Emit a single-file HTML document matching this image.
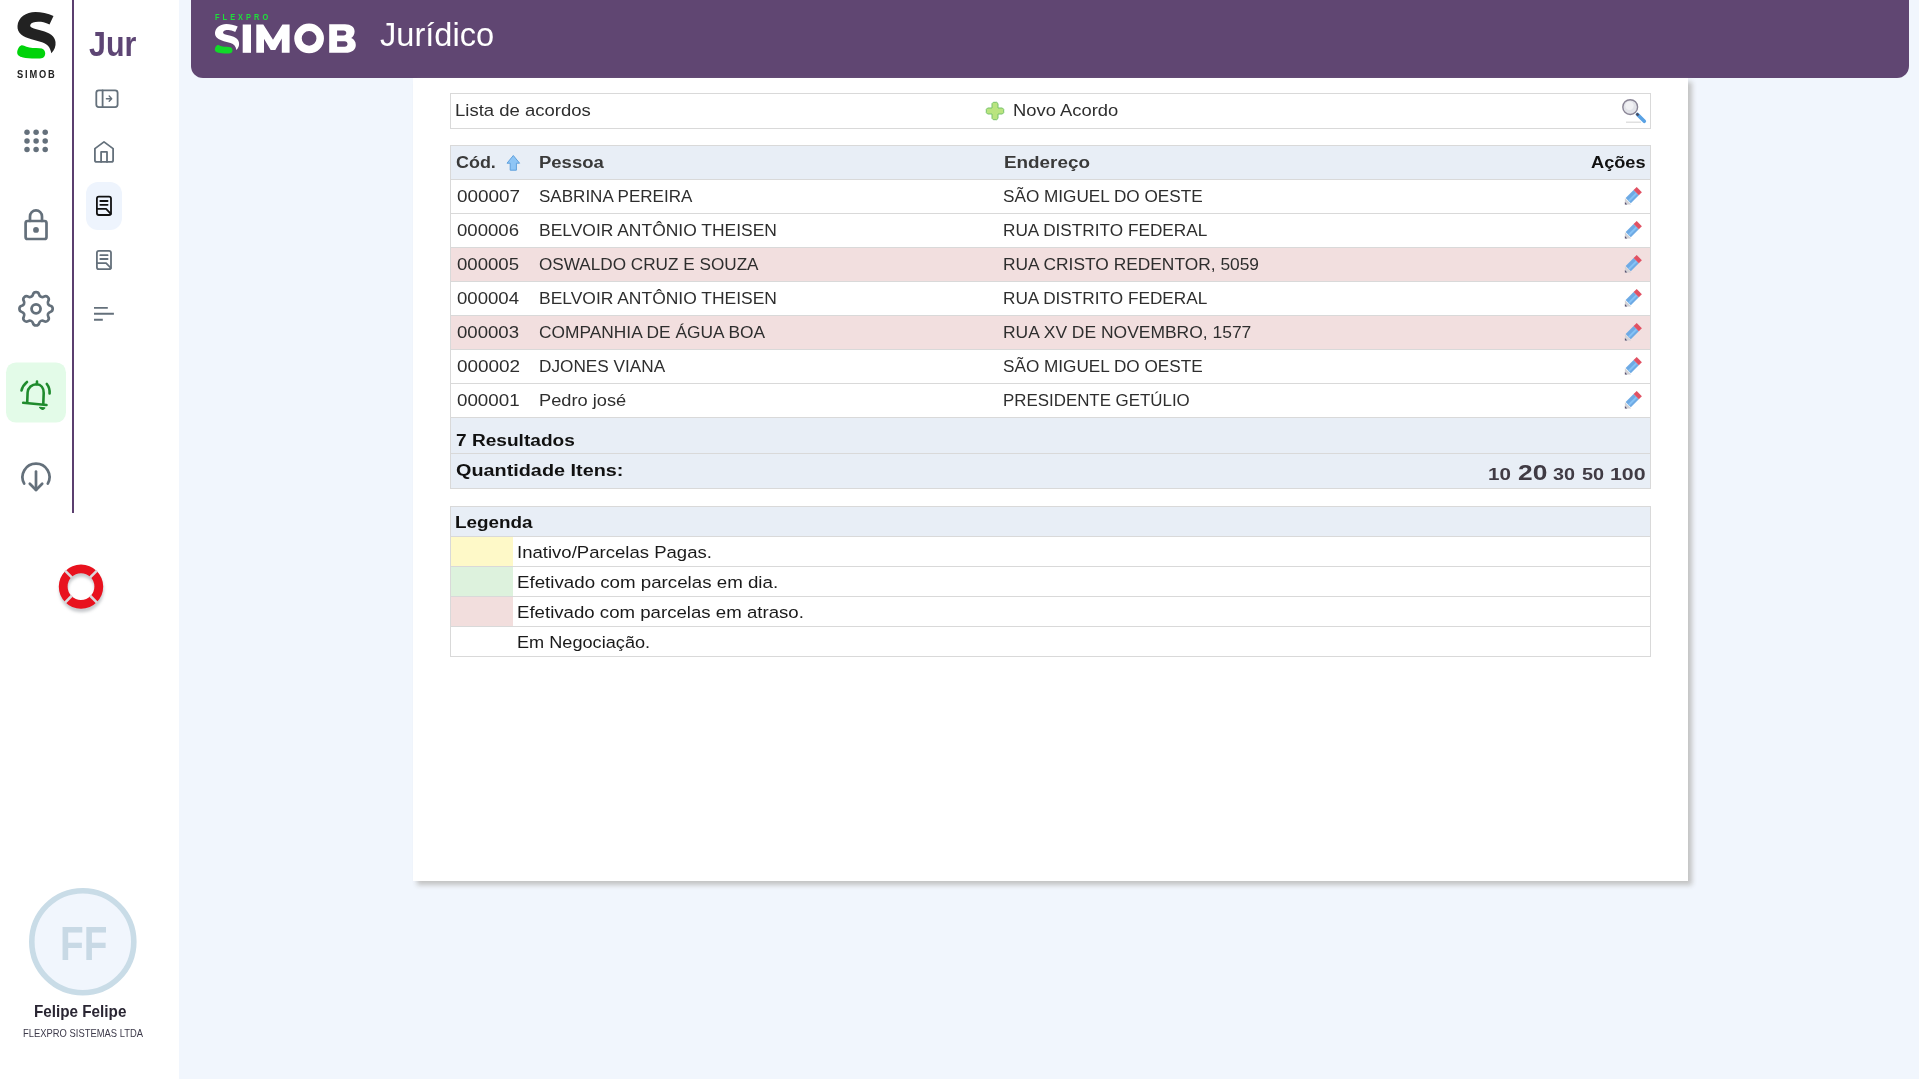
<!DOCTYPE html>
<html><head><meta charset="utf-8">
<style>
*{box-sizing:border-box;margin:0;padding:0}
html,body{width:1919px;height:1079px;overflow:hidden;background:#f1f6fd;font-family:"Liberation Sans",sans-serif}
.a{position:absolute}
.t{position:absolute;white-space:nowrap;line-height:1;transform-origin:0 0}
svg{position:absolute;overflow:visible}
</style></head><body>
<div class="a" style="left:0px;top:0px;width:179px;height:1079px;background:#fff"></div>
<div class="a" style="left:72px;top:0px;width:2px;height:513px;background:#5b3f6f"></div>
<div class="a" style="left:191px;top:0px;width:1718px;height:78px;background:#604672;border-radius:0 0 12px 12px"></div>
<div class="a" style="left:413px;top:78px;width:1275px;height:803px;background:#fff;box-shadow:4px 4px 5px #c2c2c2"></div>
<div class="a" style="left:450px;top:93px;width:1201px;height:36px;border:1px solid #d9d9d9;background:#fff"></div>
<div class="a" style="left:451px;top:146px;width:1199px;height:33px;background:#e8eef6"></div>
<div class="a" style="left:451px;top:248px;width:1199px;height:33px;background:#f2dfdf"></div>
<div class="a" style="left:451px;top:316px;width:1199px;height:33px;background:#f2dfdf"></div>
<div class="a" style="left:451px;top:418px;width:1199px;height:70px;background:#e8eef6"></div>
<div class="a" style="left:450px;top:145px;width:1201px;height:1px;background:#d9d9d9"></div>
<div class="a" style="left:450px;top:179px;width:1201px;height:1px;background:#d9d9d9"></div>
<div class="a" style="left:450px;top:213px;width:1201px;height:1px;background:#d9d9d9"></div>
<div class="a" style="left:450px;top:247px;width:1201px;height:1px;background:#d9d9d9"></div>
<div class="a" style="left:450px;top:281px;width:1201px;height:1px;background:#d9d9d9"></div>
<div class="a" style="left:450px;top:315px;width:1201px;height:1px;background:#d9d9d9"></div>
<div class="a" style="left:450px;top:349px;width:1201px;height:1px;background:#d9d9d9"></div>
<div class="a" style="left:450px;top:383px;width:1201px;height:1px;background:#d9d9d9"></div>
<div class="a" style="left:450px;top:417px;width:1201px;height:1px;background:#d9d9d9"></div>
<div class="a" style="left:450px;top:453px;width:1201px;height:1px;background:#d9d9d9"></div>
<div class="a" style="left:450px;top:488px;width:1201px;height:1px;background:#d9d9d9"></div>
<div class="a" style="left:450px;top:145px;width:1px;height:344px;background:#d9d9d9"></div>
<div class="a" style="left:1650px;top:145px;width:1px;height:344px;background:#d9d9d9"></div>
<div class="a" style="left:451px;top:507px;width:1199px;height:29px;background:#e8eef6"></div>
<div class="a" style="left:451px;top:537px;width:62px;height:29px;background:#fef9c8"></div>
<div class="a" style="left:451px;top:567px;width:62px;height:29px;background:#ddf2dd"></div>
<div class="a" style="left:451px;top:597px;width:62px;height:29px;background:#f2dedd"></div>
<div class="a" style="left:451px;top:627px;width:62px;height:29px;background:#fff"></div>
<div class="a" style="left:450px;top:506px;width:1201px;height:1px;background:#d9d9d9"></div>
<div class="a" style="left:450px;top:536px;width:1201px;height:1px;background:#d9d9d9"></div>
<div class="a" style="left:450px;top:566px;width:1201px;height:1px;background:#d9d9d9"></div>
<div class="a" style="left:450px;top:596px;width:1201px;height:1px;background:#d9d9d9"></div>
<div class="a" style="left:450px;top:626px;width:1201px;height:1px;background:#d9d9d9"></div>
<div class="a" style="left:450px;top:656px;width:1201px;height:1px;background:#d9d9d9"></div>
<div class="a" style="left:450px;top:506px;width:1px;height:151px;background:#d9d9d9"></div>
<div class="a" style="left:1650px;top:506px;width:1px;height:151px;background:#d9d9d9"></div>
<svg style="left:0;top:0" width="1919" height="1079" viewBox="0 0 1919 1079">
<path d="M53.5,16 C48,13.5 41,12 35.5,12 C26,12 18,17.5 17.5,26 C17,33 23,37 31.5,39.3 L42,42.2 C47.5,44 50.5,47.5 51.3,53.3 C54.5,50 56,46 55.5,42 C55,36 49,32.5 42,30.7 L35.5,29 C31,27.8 29.5,26.5 30.5,24.5 C31.5,22 36,21.3 41,21.8 C44.5,22.3 47.5,23.5 49.5,24.5 Z" fill="#222"/>
<path d="M21.5,45.3 C19,46 17.5,49.5 17.2,52 C17,55 19,56.5 23,57.5 C27,58.5 34,58.8 40,58.5 C44,58.2 45.3,56 45.2,53 C45,50 43,48.2 39.5,48.2 C35,48.2 30,48 26.5,46.8 C24.5,46 23,45 21.5,45.3 Z" fill="#00d30a"/>
<g transform="translate(215,24) scale(0.632) translate(-17.5,-12)"><path d="M53.5,16 C48,13.5 41,12 35.5,12 C26,12 18,17.5 17.5,26 C17,33 23,37 31.5,39.3 L42,42.2 C47.5,44 50.5,47.5 51.3,53.3 C54.5,50 56,46 55.5,42 C55,36 49,32.5 42,30.7 L35.5,29 C31,27.8 29.5,26.5 30.5,24.5 C31.5,22 36,21.3 41,21.8 C44.5,22.3 47.5,23.5 49.5,24.5 Z" fill="#fff"/><path d="M21.5,45.3 C19,46 17.5,49.5 17.2,52 C17,55 19,56.5 23,57.5 C27,58.5 34,58.8 40,58.5 C44,58.2 45.3,56 45.2,53 C45,50 43,48.2 39.5,48.2 C35,48.2 30,48 26.5,46.8 C24.5,46 23,45 21.5,45.3 Z" fill="#12d82a"/></g>
<rect x="242.7" y="24.5" width="8.3" height="28.3" fill="#fff"/>
<path d="M256.3,52.8 V24.5 H263.3 L273,39.7 L282.4,24.5 H289.6 V52.8 H281.8 V38.5 L275.3,49.9 H270.7 L264,38.8 V52.8 Z" fill="#fff"/>
<circle cx="309.1" cy="38.4" r="11.1" fill="none" stroke="#fff" stroke-width="7.5"/>
<path fill-rule="evenodd" fill="#fff" d="M329.2,24.25 H345 C351,24.25 354.6,27.3 354.6,31.5 C354.6,34.5 353,36.8 351.2,38 C354,39.2 355.8,41.5 355.8,45 C355.8,49.7 352,52.8 345.5,52.8 H329.2 Z M337.1,30.5 H343.5 C345.3,30.5 346.3,31.5 346.3,33 C346.3,34.5 345.3,35.5 343.5,35.5 H337.1 Z M337.1,41.3 H344.5 C346.5,41.3 347.5,42.5 347.5,44 C347.5,45.6 346.5,46.75 344.5,46.75 H337.1 Z"/>
<circle cx="27" cy="132.3" r="2.75" fill="#64707b"/>
<circle cx="27" cy="141" r="2.75" fill="#64707b"/>
<circle cx="27" cy="149.6" r="2.75" fill="#64707b"/>
<circle cx="36.1" cy="132.3" r="2.75" fill="#64707b"/>
<circle cx="36.1" cy="141" r="2.75" fill="#64707b"/>
<circle cx="36.1" cy="149.6" r="2.75" fill="#64707b"/>
<circle cx="45.2" cy="132.3" r="2.75" fill="#64707b"/>
<circle cx="45.2" cy="141" r="2.75" fill="#64707b"/>
<circle cx="45.2" cy="149.6" r="2.75" fill="#64707b"/>
<g fill="none" stroke="#64707b" stroke-width="2.7" stroke-linecap="round" stroke-linejoin="round"><rect x="25.6" y="221" width="20.9" height="18" rx="2"/><path d="M30,221 V216.4 A6,6 0 0 1 42,216.4 V221"/></g>
<circle cx="36" cy="229.9" r="2.9" fill="#64707b"/>
<g transform="translate(36.05,308.85) scale(1.85) translate(-12,-12)" fill="none" stroke="#64707b" stroke-width="1.45" stroke-linecap="round" stroke-linejoin="round"><path d="M10.325 4.317c.426 -1.756 2.924 -1.756 3.35 0a1.724 1.724 0 0 0 2.573 1.066c1.543 -.94 3.31 .826 2.37 2.37a1.724 1.724 0 0 0 1.065 2.572c1.756 .426 1.756 2.924 0 3.35a1.724 1.724 0 0 0 -1.066 2.573c.94 1.543 -.826 3.31 -2.37 2.37a1.724 1.724 0 0 0 -2.572 1.065c-.426 1.756 -2.924 1.756 -3.35 0a1.724 1.724 0 0 0 -2.573 -1.066c-1.543 .94 -3.31 -.826 -2.37 -2.37a1.724 1.724 0 0 0 -1.065 -2.572c-1.756 -.426 -1.756 -2.924 0 -3.35a1.724 1.724 0 0 0 1.066 -2.573c-.94 -1.543 .826 -3.31 2.37 -2.37c1 .608 2.296 .07 2.572 -1.065z"/></g>
<circle cx="36.05" cy="308.85" r="4.5" fill="none" stroke="#64707b" stroke-width="2.8"/>
<rect x="6" y="362.4" width="60" height="60.2" rx="10" fill="#e3fbe8"/>
<g fill="none" stroke="#1f8b2d" stroke-width="2.6" stroke-linecap="round" stroke-linejoin="round"><path d="M21.5,390.5 C22.5,386.5 24.5,384 27,382"/><path d="M46.8,384 C48.8,386.5 49.8,390 49.6,393.5"/><path d="M27.2,402.6 L27.6,392.5 C28,387.5 32,384.2 36.5,384.2 C41,384.4 43.8,388 43.7,393 L43.3,403.6"/><path d="M23.2,402.8 L46.5,405"/><path d="M37,381.6 L36.9,384"/></g>
<path d="M39.6,407.4 L44.8,407.9 Q42.6,411.2 39.6,407.4 Z" fill="#1f8b2d" stroke="#1f8b2d" stroke-width="1.2" stroke-linejoin="round"/>
<g fill="none" stroke="#64707b" stroke-width="2.7" stroke-linecap="round" stroke-linejoin="round"><path d="M24.2,483.6 A13.5,13.5 0 1 1 47.8,483.6"/><path d="M36,471.5 V490"/><path d="M29.8,483.8 L36,490 L42.2,483.8"/></g>
<g fill="none" stroke="#64707b" stroke-width="1.8" stroke-linecap="round" stroke-linejoin="round"><rect x="96.3" y="90.3" width="21.3" height="16.8" rx="2.5"/><path d="M102.6,90.3 V107.1"/></g>
<g fill="none" stroke="#64707b" stroke-width="1.4" stroke-linecap="round" stroke-linejoin="round"><path d="M106.4,98.7 H111.6 M109.2,96.1 L111.7,98.7 L109.2,101.3"/></g>
<g fill="none" stroke="#64707b" stroke-width="1.8" stroke-linecap="round" stroke-linejoin="round"><path d="M94.9,148.6 L104,141.9 L113.1,148.6 V160.2 Q113.1,161.9 111.4,161.9 H96.6 Q94.9,161.9 94.9,160.2 Z"/><path d="M101.1,161.9 V151.9 H107 V161.9"/></g>
<rect x="86" y="182" width="36" height="48" rx="12" fill="#eef4fd"/>
<g transform="translate(0,0)" fill="none" stroke="#111" stroke-width="1.8" stroke-linecap="round" stroke-linejoin="round"><rect x="96.9" y="196.6" width="14.1" height="18.4" rx="2"/><path d="M100.3,201 H107.6 M100.3,204.8 H107.6"/><path d="M96.9,208.9 H106.1 L110.8,213.8"/></g>
<g transform="translate(0,54.2)" fill="none" stroke="#64707b" stroke-width="1.8" stroke-linecap="round" stroke-linejoin="round"><rect x="96.9" y="196.6" width="14.1" height="18.4" rx="2"/><path d="M100.3,201 H107.6 M100.3,204.8 H107.6"/><path d="M96.9,208.9 H106.1 L110.8,213.8"/></g>
<g fill="none" stroke="#64707b" stroke-width="1.9"><path d="M94,307.9 H107.8 M94,313.75 H113.9 M94,319.8 H102.8"/></g>
<defs><filter id="sh" x="-50%" y="-50%" width="200%" height="200%"><feGaussianBlur stdDeviation="1.6"/></filter></defs>
<circle cx="81.5" cy="590" r="17.8" fill="none" stroke="#9aa0a6" stroke-opacity="0.55" stroke-width="9" filter="url(#sh)"/>
<circle cx="81" cy="586.6" r="17.8" fill="none" stroke="#e8121e" stroke-width="8.8"/>
<g transform="translate(81,586.6) rotate(45)"><rect x="13" y="-1.3" width="9.6" height="2.6" fill="#d9dadd"/></g>
<g transform="translate(81,586.6) rotate(135)"><rect x="13" y="-1.3" width="9.6" height="2.6" fill="#d9dadd"/></g>
<g transform="translate(81,586.6) rotate(225)"><rect x="13" y="-1.3" width="9.6" height="2.6" fill="#d9dadd"/></g>
<g transform="translate(81,586.6) rotate(315)"><rect x="13" y="-1.3" width="9.6" height="2.6" fill="#d9dadd"/></g>
<circle cx="82.8" cy="941.7" r="51" fill="#f1f6fd" stroke="#c9dce7" stroke-width="5.6"/>
<path d="M507,163.2 L513.3,155.5 L519.6,163.2 H516.4 V170.2 H510.2 V163.2 Z" fill="#8ec5f5" stroke="#5fa0dd" stroke-width="1"/>
<path d="M993.3,102.3 H996.7 L998,103.6 V108 H1002.4 L1003.7,109.3 V112.7 L1002.4,114 H998 V118.4 L996.7,119.7 H993.3 L992,118.4 V114 H987.6 L986.3,112.7 V109.3 L987.6,108 H992 V103.6 Z" fill="#b9e47f" stroke="#77c26b" stroke-width="1" stroke-linejoin="round"/>
<path d="M1626,122.2 H1641" stroke="#d8d8d8" stroke-width="1.2"/>
<path d="M1637.5,114.5 L1644.3,121.3" stroke="#5aa2e4" stroke-width="3.6" stroke-linecap="round"/>
<path d="M1636.5,113.5 L1638.5,115.5" stroke="#4b4b5e" stroke-width="2.4"/>
<circle cx="1630.2" cy="107.1" r="7.4" fill="#e2e3e8" stroke="#8a8596" stroke-width="1.4"/>
<circle cx="1629.5" cy="105.8" r="4.2" fill="#f1f1f4"/>
<g transform="translate(0,0)"><path d="M1624.9,198.2 L1631.2,204.5 H1624.9 Z" fill="#d2d2d6"/><path d="M1624.9,202.1 L1627.3,204.5 H1624.9 Z" fill="#57516f"/><path d="M1625.6,198.1 L1633.6,190.1 L1638.8,195.3 L1630.8,203.3 Z" fill="#6eaae4"/><path d="M1627.9,200.4 L1635.9,192.4 L1637.3,193.8 L1629.3,201.8 Z" fill="#86c2f6"/><path d="M1633.6,190.1 L1636.7,187.0 L1641.9,192.2 L1638.8,195.3 Z" fill="#e05163"/></g>
<g transform="translate(0,34)"><path d="M1624.9,198.2 L1631.2,204.5 H1624.9 Z" fill="#d2d2d6"/><path d="M1624.9,202.1 L1627.3,204.5 H1624.9 Z" fill="#57516f"/><path d="M1625.6,198.1 L1633.6,190.1 L1638.8,195.3 L1630.8,203.3 Z" fill="#6eaae4"/><path d="M1627.9,200.4 L1635.9,192.4 L1637.3,193.8 L1629.3,201.8 Z" fill="#86c2f6"/><path d="M1633.6,190.1 L1636.7,187.0 L1641.9,192.2 L1638.8,195.3 Z" fill="#e05163"/></g>
<g transform="translate(0,68)"><path d="M1624.9,198.2 L1631.2,204.5 H1624.9 Z" fill="#d2d2d6"/><path d="M1624.9,202.1 L1627.3,204.5 H1624.9 Z" fill="#57516f"/><path d="M1625.6,198.1 L1633.6,190.1 L1638.8,195.3 L1630.8,203.3 Z" fill="#6eaae4"/><path d="M1627.9,200.4 L1635.9,192.4 L1637.3,193.8 L1629.3,201.8 Z" fill="#86c2f6"/><path d="M1633.6,190.1 L1636.7,187.0 L1641.9,192.2 L1638.8,195.3 Z" fill="#e05163"/></g>
<g transform="translate(0,102)"><path d="M1624.9,198.2 L1631.2,204.5 H1624.9 Z" fill="#d2d2d6"/><path d="M1624.9,202.1 L1627.3,204.5 H1624.9 Z" fill="#57516f"/><path d="M1625.6,198.1 L1633.6,190.1 L1638.8,195.3 L1630.8,203.3 Z" fill="#6eaae4"/><path d="M1627.9,200.4 L1635.9,192.4 L1637.3,193.8 L1629.3,201.8 Z" fill="#86c2f6"/><path d="M1633.6,190.1 L1636.7,187.0 L1641.9,192.2 L1638.8,195.3 Z" fill="#e05163"/></g>
<g transform="translate(0,136)"><path d="M1624.9,198.2 L1631.2,204.5 H1624.9 Z" fill="#d2d2d6"/><path d="M1624.9,202.1 L1627.3,204.5 H1624.9 Z" fill="#57516f"/><path d="M1625.6,198.1 L1633.6,190.1 L1638.8,195.3 L1630.8,203.3 Z" fill="#6eaae4"/><path d="M1627.9,200.4 L1635.9,192.4 L1637.3,193.8 L1629.3,201.8 Z" fill="#86c2f6"/><path d="M1633.6,190.1 L1636.7,187.0 L1641.9,192.2 L1638.8,195.3 Z" fill="#e05163"/></g>
<g transform="translate(0,170)"><path d="M1624.9,198.2 L1631.2,204.5 H1624.9 Z" fill="#d2d2d6"/><path d="M1624.9,202.1 L1627.3,204.5 H1624.9 Z" fill="#57516f"/><path d="M1625.6,198.1 L1633.6,190.1 L1638.8,195.3 L1630.8,203.3 Z" fill="#6eaae4"/><path d="M1627.9,200.4 L1635.9,192.4 L1637.3,193.8 L1629.3,201.8 Z" fill="#86c2f6"/><path d="M1633.6,190.1 L1636.7,187.0 L1641.9,192.2 L1638.8,195.3 Z" fill="#e05163"/></g>
<g transform="translate(0,204)"><path d="M1624.9,198.2 L1631.2,204.5 H1624.9 Z" fill="#d2d2d6"/><path d="M1624.9,202.1 L1627.3,204.5 H1624.9 Z" fill="#57516f"/><path d="M1625.6,198.1 L1633.6,190.1 L1638.8,195.3 L1630.8,203.3 Z" fill="#6eaae4"/><path d="M1627.9,200.4 L1635.9,192.4 L1637.3,193.8 L1629.3,201.8 Z" fill="#86c2f6"/><path d="M1633.6,190.1 L1636.7,187.0 L1641.9,192.2 L1638.8,195.3 Z" fill="#e05163"/></g>
</svg>
<div class="t" style="left:454.94px;top:102.00px;font-size:17.4px;color:#2e2e2e;transform:scaleX(1.0635);">Lista de acordos</div>
<div class="t" style="left:1012.74px;top:102.00px;font-size:17.4px;color:#2e2e2e;transform:scaleX(1.0571);">Novo Acordo</div>
<div class="t" style="left:456.20px;top:154.00px;font-size:17.4px;font-weight:bold;color:#3a3a3a;transform:scaleX(1.0316);">Cód.</div>
<div class="t" style="left:538.94px;top:154.00px;font-size:17.4px;font-weight:bold;color:#3a3a3a;transform:scaleX(1.0633);">Pessoa</div>
<div class="t" style="left:1003.52px;top:154.00px;font-size:17.4px;font-weight:bold;color:#3a3a3a;transform:scaleX(1.0846);">Endereço</div>
<div class="t" style="left:1591.20px;top:154.00px;font-size:17.4px;font-weight:bold;color:#111;transform:scaleX(1.0462);">Ações</div>
<div class="t" style="left:456.50px;top:188.00px;font-size:17.4px;color:#2e2e2e;transform:scaleX(1.0877);">000007</div>
<div class="t" style="left:539.02px;top:188.00px;font-size:17.4px;color:#2e2e2e;transform:scaleX(0.9795);">SABRINA PEREIRA</div>
<div class="t" style="left:1003.01px;top:188.00px;font-size:17.4px;color:#2e2e2e;transform:scaleX(0.9871);">SÃO MIGUEL DO OESTE</div>
<div class="t" style="left:456.50px;top:222.00px;font-size:17.4px;color:#2e2e2e;transform:scaleX(1.0690);">000006</div>
<div class="t" style="left:539.00px;top:222.00px;font-size:17.4px;color:#2e2e2e;transform:scaleX(1.0034);">BELVOIR ANTÔNIO THEISEN</div>
<div class="t" style="left:1003.01px;top:222.00px;font-size:17.4px;color:#2e2e2e;transform:scaleX(0.9893);">RUA DISTRITO FEDERAL</div>
<div class="t" style="left:456.50px;top:256.00px;font-size:17.4px;color:#2e2e2e;transform:scaleX(1.0690);">000005</div>
<div class="t" style="left:539.01px;top:256.00px;font-size:17.4px;color:#2e2e2e;transform:scaleX(0.9865);">OSWALDO CRUZ E SOUZA</div>
<div class="t" style="left:1003.00px;top:256.00px;font-size:17.4px;color:#2e2e2e;transform:scaleX(0.9984);">RUA CRISTO REDENTOR, 5059</div>
<div class="t" style="left:456.50px;top:290.00px;font-size:17.4px;color:#2e2e2e;transform:scaleX(1.0690);">000004</div>
<div class="t" style="left:539.00px;top:290.00px;font-size:17.4px;color:#2e2e2e;transform:scaleX(1.0034);">BELVOIR ANTÔNIO THEISEN</div>
<div class="t" style="left:1003.01px;top:290.00px;font-size:17.4px;color:#2e2e2e;transform:scaleX(0.9893);">RUA DISTRITO FEDERAL</div>
<div class="t" style="left:456.50px;top:324.00px;font-size:17.4px;color:#2e2e2e;transform:scaleX(1.0690);">000003</div>
<div class="t" style="left:539.00px;top:324.00px;font-size:17.4px;color:#2e2e2e;transform:scaleX(0.9969);">COMPANHIA DE ÁGUA BOA</div>
<div class="t" style="left:1003.00px;top:324.00px;font-size:17.4px;color:#2e2e2e;transform:scaleX(1.0037);">RUA XV DE NOVEMBRO, 1577</div>
<div class="t" style="left:456.50px;top:358.00px;font-size:17.4px;color:#2e2e2e;transform:scaleX(1.0877);">000002</div>
<div class="t" style="left:539.01px;top:358.00px;font-size:17.4px;color:#2e2e2e;transform:scaleX(0.9890);">DJONES VIANA</div>
<div class="t" style="left:1003.01px;top:358.00px;font-size:17.4px;color:#2e2e2e;transform:scaleX(0.9871);">SÃO MIGUEL DO OESTE</div>
<div class="t" style="left:456.50px;top:392.00px;font-size:17.4px;color:#2e2e2e;transform:scaleX(1.0789);">000001</div>
<div class="t" style="left:538.95px;top:392.00px;font-size:17.4px;color:#2e2e2e;transform:scaleX(1.0488);">Pedro josé</div>
<div class="t" style="left:1003.03px;top:392.00px;font-size:17.4px;color:#2e2e2e;transform:scaleX(0.9712);">PRESIDENTE GETÚLIO</div>
<div class="t" style="left:456.00px;top:432.30px;font-size:17.4px;font-weight:bold;color:#111;transform:scaleX(1.0981);">7 Resultados</div>
<div class="t" style="left:456.00px;top:461.60px;font-size:17.4px;font-weight:bold;color:#111;transform:scaleX(1.1397);">Quantidade Itens:</div>
<div class="t" style="left:1487.59px;top:466.00px;font-size:17px;font-weight:bold;color:#403b44;transform:scaleX(1.2111);">10</div>
<div class="t" style="left:1517.70px;top:462.00px;font-size:22.5px;font-weight:bold;color:#403b44;transform:scaleX(1.1708);">20</div>
<div class="t" style="left:1552.90px;top:466.00px;font-size:17px;font-weight:bold;color:#403b44;transform:scaleX(1.1632);">30</div>
<div class="t" style="left:1582.20px;top:466.00px;font-size:17px;font-weight:bold;color:#403b44;transform:scaleX(1.1684);">50</div>
<div class="t" style="left:1610.24px;top:466.00px;font-size:17px;font-weight:bold;color:#403b44;transform:scaleX(1.2556);">100</div>
<div class="t" style="left:454.92px;top:514.30px;font-size:17.4px;font-weight:bold;color:#111;transform:scaleX(1.0845);">Legenda</div>
<div class="t" style="left:516.53px;top:544.00px;font-size:17.4px;color:#1a1a1a;transform:scaleX(1.0667);">Inativo/Parcelas Pagas.</div>
<div class="t" style="left:516.52px;top:574.00px;font-size:17.4px;color:#1a1a1a;transform:scaleX(1.0762);">Efetivado com parcelas em dia.</div>
<div class="t" style="left:516.53px;top:604.00px;font-size:17.4px;color:#1a1a1a;transform:scaleX(1.0714);">Efetivado com parcelas em atraso.</div>
<div class="t" style="left:516.56px;top:634.00px;font-size:17.4px;color:#1a1a1a;transform:scaleX(1.0432);">Em Negociação.</div>
<div class="t" style="left:379.90px;top:18.00px;font-size:33px;color:#fff;transform:scaleX(0.9870);">Jurídico</div>
<div class="t" style="left:88.80px;top:25.70px;font-size:35px;font-weight:bold;color:#5d4574;transform:scaleX(0.8685);">Jur</div>
<div class="t" style="left:33.58px;top:1003.30px;font-size:16.5px;font-weight:bold;color:#2a2633;transform:scaleX(0.9242);">Felipe Felipe</div>
<div class="t" style="left:22.78px;top:1028.00px;font-size:11.5px;color:#3d3a4a;transform:scaleX(0.8178);">FLEXPRO SISTEMAS LTDA</div>
<div class="t" style="left:59.58px;top:920.00px;font-size:48px;font-weight:bold;color:#c8d9e5;transform:scaleX(0.8074);">FF</div>
<div class="t" style="left:17.00px;top:70.00px;font-size:10px;font-weight:bold;color:#222;transform:scaleX(0.9268);letter-spacing:2px">SIMOB</div>
<div class="t" style="left:215.00px;top:13.00px;font-size:8.6px;font-weight:bold;color:#1ee03a;transform:scaleX(0.8548);letter-spacing:3.6px">FLEXPRO</div>
</body></html>
